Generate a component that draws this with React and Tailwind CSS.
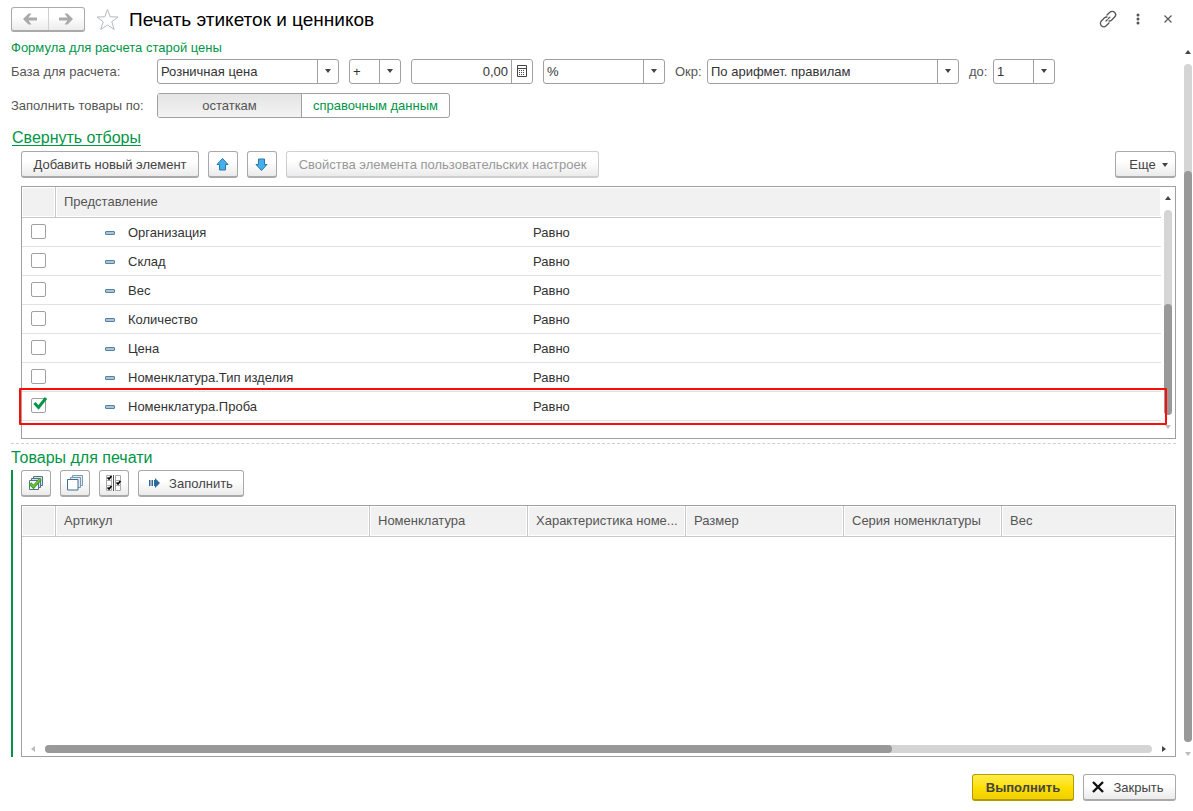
import { useState } from 'react'

const initialFilters = [
  { id: 1, name: 'Организация', condition: 'Равно', checked: false },
  { id: 2, name: 'Склад', condition: 'Равно', checked: false },
  { id: 3, name: 'Вес', condition: 'Равно', checked: false },
  { id: 4, name: 'Количество', condition: 'Равно', checked: false },
  { id: 5, name: 'Цена', condition: 'Равно', checked: false },
  { id: 6, name: 'Номенклатура.Тип изделия', condition: 'Равно', checked: false },
  { id: 7, name: 'Номенклатура.Проба', condition: 'Равно', checked: true },
]

const goodsColumns = [
  { title: 'Артикул', width: 'w-[314px]' },
  { title: 'Номенклатура', width: 'w-[158px]' },
  { title: 'Характеристика номе...', width: 'w-[158px]' },
  { title: 'Размер', width: 'w-[158px]' },
  { title: 'Серия номенклатуры', width: 'w-[158px]' },
  { title: 'Вес', width: '' },
]

const buttonBase =
  'flex h-[27px] items-center justify-center rounded-[3px] border border-[#a9a9a9] border-b-2 bg-linear-to-b from-white from-40% to-[#ebebeb] text-[#444]'
const buttonStyle = `${buttonBase} pt-px`
const iconButtonStyle = `${buttonBase} w-[30px] pr-px`

function Arrow({ dir = 'down', className = 'text-[#444]' }) {
  const points = {
    up: '0,5 3,1 6,5',
    down: '0,1 6,1 3,5',
    left: '5,0 1,3 5,6',
    right: '1,0 5,3 1,6',
  }
  return (
    <svg className={`block h-[6px] w-[6px] shrink-0 ${className}`} viewBox="0 0 6 6" fill="currentColor">
      <polygon points={points[dir]} />
    </svg>
  )
}

function Select({ label, options, className }) {
  return (
    <div className={`relative ${className}`}>
      <select
        aria-label={label}
        className="block h-[25px] w-full appearance-none rounded-[3px] border border-[#a0a0a0] bg-white pl-[3px] pr-[22px] text-[#333] outline-none"
      >
        {options.map(o => (
          <option key={o}>{o}</option>
        ))}
      </select>
      <span className="pointer-events-none absolute inset-y-0 right-0 flex w-[22px] items-center justify-center border-l border-[#a0a0a0] pb-[2px] pr-[2px]">
        <Arrow />
      </span>
    </div>
  )
}

function Checkbox({ label, checked, onChange }) {
  return (
    <label className="relative block h-[15px] w-[15px]">
      <input
        type="checkbox"
        aria-label={label}
        checked={checked}
        onChange={onChange}
        className="block h-[15px] w-[15px] appearance-none rounded-[2px] border border-[#a0a0a0] bg-white"
      />
      {checked && (
        <svg className="pointer-events-none absolute -top-px left-[2px] h-[14px] w-[15px]" viewBox="0 0 15 14" fill="none">
          <path d="M1.500 6L5.500 10.500L13 1" stroke="#009646" strokeWidth="3" />
        </svg>
      )}
    </label>
  )
}

function MoveIcon({ down }) {
  return (
    <svg className={`h-[13px] w-[13px] ${down ? 'rotate-180' : ''}`} viewBox="0 0 13 13">
      <path d="M6.500 .5L12 6.500H9.500V12H3.500V6.500H1Z" fill="#46b0ee" stroke="#2579a9" strokeLinejoin="round" />
    </svg>
  )
}

function CheckAllIcon() {
  return (
    <svg className="h-4 w-4" viewBox="0 0 16 16" fill="#d5e1e8" stroke="#4f7389">
      <path d="M5.500 1.500h9v9h-9z" />
      <path d="M3.500 3.500h9v9h-9z" />
      <path d="M1.500 5.500h9v9h-9z" fill="#fff" />
      <path d="M2 8.500L5.500 12L12.500 4" fill="none" stroke="#3c9a22" strokeWidth="3.200" />
      <path d="M2.500 9L5.500 11.700L12 4.300" fill="none" stroke="#6cc83a" strokeWidth="1.600" />
    </svg>
  )
}

function UncheckAllIcon() {
  return (
    <svg className="h-4 w-4" viewBox="0 0 16 16" fill="#dfe9ef" stroke="#7c9bae">
      <path d="M5.500 .5h10v10h-10z" />
      <path d="M3.500 2.500h10v10h-10z" />
      <path d="M.5 4.500h10.500v10.500h-10.500z" fill="#fff" stroke="#3f6f93" />
    </svg>
  )
}

function InvertIcon() {
  return (
    <svg className="h-4 w-4" viewBox="0 0 16 16" fill="none">
      <path d="M.5 .5h5v15h-5zM.5 5.500h5M.5 10.500h5M9.500 .5h5v15h-5zM9.500 5.500h5M9.500 10.500h5" fill="#fff" stroke="#aaa" />
      <path d="M7.500 0v16" stroke="#555" />
      <path d="M1.500 2.500L3 4L5.500 1M1.500 12.500L3 14L5.500 11M10.500 7.500L12 9L14.500 6" stroke="#000" strokeWidth="1.700" />
    </svg>
  )
}

function VerticalScroll({ above, thumb }) {
  return (
    <div className="flex w-[8px] shrink-0 flex-col items-center gap-[9px]">
      <Arrow dir="up" />
      <div className="flex w-full flex-1 flex-col rounded-full bg-[#d5d5d5]">
        <div className={above} />
        <div className={`w-full rounded-full bg-[#999] ${thumb}`} />
      </div>
      <Arrow className="text-[#bbb]" />
    </div>
  )
}

function HeaderCell({ children, last, colSpan }) {
  return (
    <th
      colSpan={colSpan}
      className={`h-[31px] border-b border-[#c8c8c8] p-px text-left font-normal ${last ? '' : 'border-r'}`}
    >
      <div className="h-[28px] overflow-hidden bg-[#f1f1f1] pl-[7px] leading-[27px] whitespace-nowrap text-[#555]">{children}</div>
    </th>
  )
}

function TopBar() {
  return (
    <header className="flex h-[39px] shrink-0 items-center pl-[11px] pr-[21px]">
      <div className="flex h-[25px] w-[74px] rounded-[3px] border border-b-2 border-[#aaa] bg-linear-to-b from-white from-40% to-[#ececec]">
        <button aria-label="Назад" className="flex flex-1 items-center justify-center border-r border-[#d0d0d0]">
          <svg className="h-[12px] w-[14px]" viewBox="0 0 14 12" fill="#aaa">
            <path d="M0 6L5.500 .5H8.500L5.500 4.500H14V7.500H5.500L8.500 11.500H5.500Z" />
          </svg>
        </button>
        <button aria-label="Вперед" className="flex flex-1 items-center justify-center">
          <svg className="h-[12px] w-[14px]" viewBox="0 0 14 12" fill="#aaa">
            <path d="M14 6L8.500 .5H5.500L8.500 4.500H0V7.500H8.500L5.500 11.500H8.500Z" />
          </svg>
        </button>
      </div>
      <button aria-label="В избранное" className="ml-[11px]">
        <svg className="h-[23px] w-[23px]" viewBox="0 0 23 23" fill="none" stroke="#b4bac0">
          <path d="M11.500 1.500L14.200 8.800L22 9L15.800 13.800L18.200 21.500L11.500 17L4.800 21.500L7.200 13.800L1 9L8.800 8.800Z" />
        </svg>
      </button>
      <h1 className="ml-[10px] text-[19px] text-black">Печать этикеток и ценников</h1>
      <div className="ml-auto flex items-center pb-[2px] text-[#555]">
        <button aria-label="Получить ссылку">
          <svg className="h-[18px] w-[18px]" viewBox="0 0 18 18" fill="none" stroke="currentColor" strokeWidth="1.300" strokeLinecap="round">
            <path d="M8 5L10.800 2.300A3.300 3.300 0 0 1 15.600 7L12.500 10.200A3.300 3.300 0 0 1 10 11" />
            <path d="M10 13L7.200 15.700A3.300 3.300 0 0 1 2.400 11L5.500 7.800A3.300 3.300 0 0 1 8 7" />
            <path d="M7 11L11 7" strokeDasharray="2 1.500" />
          </svg>
        </button>
        <button aria-label="Меню" className="ml-[19px]">
          <svg className="h-[12px] w-[4px]" viewBox="0 0 4 12" fill="currentColor">
            <circle cx="2" cy="2" r="1.500" />
            <circle cx="2" cy="6" r="1.500" />
            <circle cx="2" cy="10" r="1.500" />
          </svg>
        </button>
        <button aria-label="Закрыть окно" className="ml-[24px]">
          <svg className="h-[8px] w-[8px]" viewBox="0 0 8 8" stroke="currentColor" strokeWidth="1.200">
            <path d="M.5 .5L7.500 7.500M7.500 .5L.5 7.500" />
          </svg>
        </button>
      </div>
    </header>
  )
}

function FormulaRow() {
  return (
    <div className="flex items-center gap-[10px] text-[#555]">
      <span className="w-[136px] shrink-0">База для расчета:</span>
      <Select label="База для расчета" options={['Розничная цена', 'Оптовая цена']} className="w-[182px]" />
      <Select label="Знак" options={['+', '-']} className="w-[52px]" />
      <div className="flex h-[25px] w-[122px] rounded-[3px] border border-[#a0a0a0]">
        <input aria-label="Значение" defaultValue="0,00" className="w-0 flex-1 pr-[3px] text-right text-[#333] outline-none" />
        <button aria-label="Калькулятор" className="flex w-[21px] items-center justify-center border-l border-[#a0a0a0] pb-[2px] pr-px">
          <svg className="h-[12px] w-[10px]" viewBox="0 0 10 12" fill="none" stroke="#444">
            <path d="M.5 .5h9v11h-9zM.5 3.500h9" />
            <path d="M2 5.500h6M2 7.500h6M2 9.500h6" strokeDasharray="1 1" />
          </svg>
        </button>
      </div>
      <Select label="Единица" options={['%', 'руб.']} className="w-[122px]" />
      <div className="flex items-center">
        <span className="w-[32px]">Окр:</span>
        <Select label="Округление" options={['По арифмет. правилам', 'В большую сторону']} className="w-[252px]" />
      </div>
      <div className="flex items-center">
        <span className="w-[24px]">до:</span>
        <Select label="Округлить до" options={['1', '10', '100']} className="w-[62px]" />
      </div>
    </div>
  )
}

function FiltersTable({ filters, toggleFilter }) {
  return (
    <div className="relative mt-[8px] flex h-[253px] shrink-0 border border-[#a0a0a0]">
      <div className="flex-1">
        <table className="w-full table-fixed border-separate border-spacing-0">
          <colgroup>
            <col className="w-[34px]" />
            <col className="w-[469px]" />
            <col />
          </colgroup>
          <thead>
            <tr>
              <HeaderCell />
              <HeaderCell colSpan={2} last>
                Представление
              </HeaderCell>
            </tr>
          </thead>
          <tbody className="text-[#333]">
            {filters.map(f => (
              <tr key={f.id} className="h-[29px]">
                <td className="border-b border-[#e2e2e2] pb-px pl-[9px]">
                  <Checkbox label={f.name} checked={f.checked} onChange={() => toggleFilter(f.id)} />
                </td>
                <td className="border-b border-[#e2e2e2] pl-[49px] pt-[2px]">
                  <div className="flex items-center gap-[13px]">
                    <span className="h-[4px] w-[10px] rounded-[1px] border border-[#5580a0] bg-[#a9c6da]" />
                    {f.name}
                  </div>
                </td>
                <td className="border-b border-[#e2e2e2] pl-[8px] pt-[2px]">{f.condition}</td>
              </tr>
            ))}
          </tbody>
        </table>
      </div>
      <div className="flex px-[3px] pb-[8px] pt-[8px]">
        <VerticalScroll above="h-[94px]" thumb="flex-1" />
      </div>
      {/* Highlight frame around the last filter */}
      <div className="pointer-events-none absolute -left-[3px] right-[8px] top-[201px] h-[37px] rounded-[1px] border-2 border-[#ff0d05]" />
    </div>
  )
}

function GoodsTable() {
  return (
    <div className="mt-[8px] flex min-h-[120px] flex-1 flex-col border border-[#a0a0a0]">
      <table className="w-full table-fixed border-separate border-spacing-0">
        <colgroup>
          <col className="w-[34px]" />
          {goodsColumns.map(c => (
            <col key={c.title} className={c.width} />
          ))}
        </colgroup>
        <thead>
          <tr>
            <HeaderCell />
            {goodsColumns.map((c, i) => (
              <HeaderCell key={c.title} last={i === goodsColumns.length - 1}>
                {c.title}
              </HeaderCell>
            ))}
          </tr>
        </thead>
      </table>
      <div className="mt-auto flex items-center gap-[9px] px-[8px] pb-[3px]">
        <Arrow dir="left" className="text-[#bbb]" />
        <div className="h-[8px] flex-1 rounded-full bg-[#d5d5d5]">
          <div className="h-full w-[76.5%] rounded-full bg-[#999]" />
        </div>
        <Arrow dir="right" />
      </div>
    </div>
  )
}

function App() {
  const [filters, setFilters] = useState(initialFilters)
  const [fillBy, setFillBy] = useState('stock')

  const toggleFilter = id => {
    setFilters(filters.map(f => (f.id === id ? { ...f, checked: !f.checked } : f)))
  }

  return (
    <div className="flex h-screen flex-col bg-white font-['Liberation_Sans',Arial,sans-serif] text-[13px] leading-[16px]">
      <TopBar />

      <div className="flex min-h-0 flex-1 gap-[8px] pl-[11px] pr-px">
        <main className="flex min-w-0 flex-1 flex-col">
          <p className="pt-px text-[#009646]">Формула для расчета старой цены</p>
          <div className="mt-[3px]">
            <FormulaRow />
          </div>

          <div className="mt-[9px] flex items-center text-[#555]">
            <span className="w-[146px]">Заполнить товары по:</span>
            <div className="flex h-[25px] overflow-hidden rounded-[3px] border border-[#a0a0a0]">
              <button
                onClick={() => setFillBy('stock')}
                className={`w-[143px] ${fillBy === 'stock' ? 'bg-linear-to-b from-[#e4e4e4] to-[#f3f3f3]' : 'text-[#009646]'}`}
              >
                остаткам
              </button>
              <button
                onClick={() => setFillBy('reference')}
                className={`w-[148px] border-l border-[#a0a0a0] ${fillBy === 'reference' ? 'bg-linear-to-b from-[#e4e4e4] to-[#f3f3f3]' : 'text-[#009646]'}`}
              >
                справочным данным
              </button>
            </div>
          </div>

          <a href="#filters" className="ml-px mt-[12px] self-start border-b border-[#009646] text-[16px] leading-[15px] text-[#009646]">
            Свернуть отборы
          </a>

          {/* Filters */}
          <section id="filters" className="mt-[5px] flex flex-col pl-[10px]">
            <div className="flex gap-[9px]">
              <button className={`${buttonStyle} w-[178px]`}>Добавить новый элемент</button>
              <button aria-label="Переместить вверх" className={iconButtonStyle}>
                <MoveIcon />
              </button>
              <button aria-label="Переместить вниз" className={iconButtonStyle}>
                <MoveIcon down />
              </button>
              <button disabled className="flex h-[27px] w-[313px] items-center justify-center rounded-[3px] border border-b-2 border-[#cfcfcf] bg-linear-to-b from-white from-40% to-[#ebebeb] pt-px text-[#999]">
                Свойства элемента пользовательских настроек
              </button>
              <button className={`${buttonStyle} ml-auto w-[61px] gap-[6px] pl-[6px]`}>
                Еще
                <Arrow />
              </button>
            </div>
            <FiltersTable filters={filters} toggleFilter={toggleFilter} />
          </section>

          <div className="mt-[4px] border-t border-dashed border-[#d0d0d0]" />

          {/* Goods to print */}
          <h2 className="mt-[4px] text-[16px] leading-[20px] text-[#009646]">Товары для печати</h2>
          <section className="mt-[2px] flex min-h-0 flex-1 flex-col border-l-2 border-[#009646] pl-[8px]">
            <div className="flex gap-[9px]">
              <button aria-label="Отметить все" className={iconButtonStyle}>
                <CheckAllIcon />
              </button>
              <button aria-label="Снять отметки" className={iconButtonStyle}>
                <UncheckAllIcon />
              </button>
              <button aria-label="Инвертировать отметки" className={iconButtonStyle}>
                <InvertIcon />
              </button>
              <button className={`${buttonStyle} w-[106px] gap-[9px]`}>
                <svg className="mb-[2px] h-[10px] w-[11px]" viewBox="0 0 11 10" fill="#2a6a99">
                  <path d="M0 2h1.500v6H0zM2.500 2H4v6H2.500zM5 2h1V0l5 5l-5 5V8H5z" />
                </svg>
                Заполнить
              </button>
            </div>
            <GoodsTable />
          </section>
        </main>

        <div className="flex pt-[10px]">
          <VerticalScroll above="h-[107px]" thumb="flex-1" />
        </div>
      </div>

      <footer className="flex shrink-0 justify-end gap-[9px] pb-[10px] pr-[17px] pt-[17px]">
        <button className="h-[27px] w-[102px] rounded-[3px] border border-b-2 border-[#b39b00] bg-linear-to-b from-[#ffec45] via-[#ffe000] to-[#efd000] pt-px font-bold text-[#444]">
          Выполнить
        </button>
        <button className={`${buttonStyle} w-[93px] gap-[9px] pr-[3px]`}>
          <svg className="mb-px h-[12px] w-[12px]" viewBox="0 0 12 12" stroke="#111" strokeWidth="2.400">
            <path d="M1 1L11 11M11 1L1 11" />
          </svg>
          Закрыть
        </button>
      </footer>
    </div>
  )
}

export default App
